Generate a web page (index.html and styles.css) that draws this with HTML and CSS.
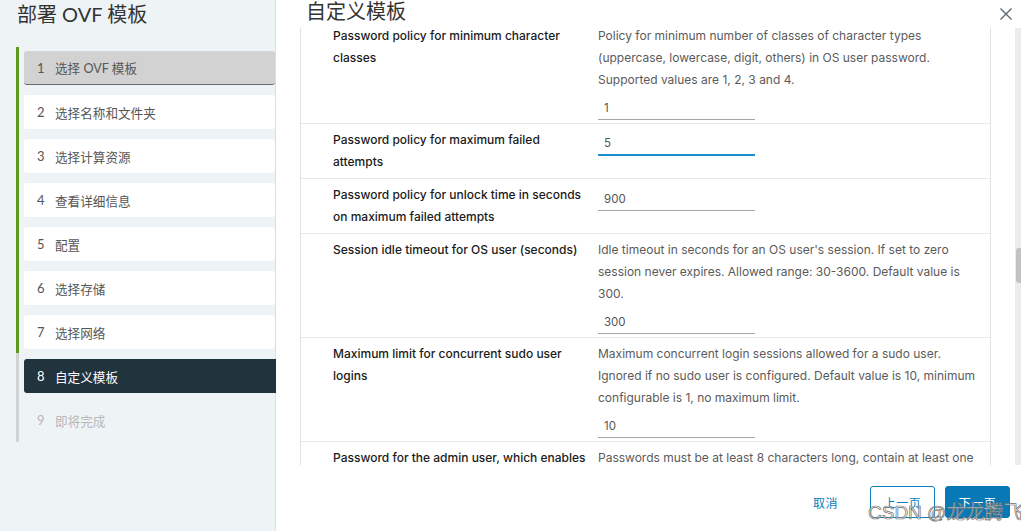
FILE: index.html
```html
<!DOCTYPE html>
<html lang="zh">
<head>
<meta charset="utf-8">
<title>部署 OVF 模板</title>
<link rel="stylesheet" href="styles.css">
</head>
<body>
<div class="app">
  <aside class="sidebar">
    <h1 class="side-title">部署 OVF 模板</h1>
    <div class="steps">
      <div class="progress"><div class="progress-done"></div><div class="progress-todo"></div></div>
      <ol class="step-list">
        <li class="step step-first"><span class="num">1</span>选择 OVF 模板</li>
        <li class="step"><span class="num">2</span>选择名称和文件夹</li>
        <li class="step"><span class="num">3</span>选择计算资源</li>
        <li class="step"><span class="num">4</span>查看详细信息</li>
        <li class="step"><span class="num">5</span>配置</li>
        <li class="step"><span class="num">6</span>选择存储</li>
        <li class="step"><span class="num">7</span>选择网络</li>
        <li class="step step-active"><span class="num">8</span>自定义模板</li>
        <li class="step step-disabled"><span class="num">9</span>即将完成</li>
      </ol>
    </div>
  </aside>
  <main class="main">
    <header class="main-head">
      <h2 class="main-title">自定义模板</h2>
      <svg class="close" width="14" height="14" viewBox="0 0 14 14"><path d="M1.5 1.5 L12.5 12.5 M12.5 1.5 L1.5 12.5" stroke="#5a6770" stroke-width="1.4" fill="none"/></svg>
    </header>
    <div class="scroll-area">
      <div class="viewport">
        <div class="table">
          <div class="row">
            <div class="label">Password policy for minimum character classes</div>
            <div class="field">
              <p class="desc">Policy for minimum number of classes of character types (uppercase, lowercase, digit, others) in OS user password. Supported values are 1, 2, 3 and 4.</p>
              <div class="input">1</div>
            </div>
          </div>
          <div class="row">
            <div class="label">Password policy for maximum failed attempts</div>
            <div class="field">
              <div class="input input-focus">5</div>
            </div>
          </div>
          <div class="row">
            <div class="label">Password policy for unlock time in seconds on maximum failed attempts</div>
            <div class="field">
              <div class="input">900</div>
            </div>
          </div>
          <div class="row">
            <div class="label">Session idle timeout for OS user (seconds)</div>
            <div class="field">
              <p class="desc">Idle timeout in seconds for an OS user's session. If set to zero session never expires. Allowed range: 30-3600. Default value is 300.</p>
              <div class="input">300</div>
            </div>
          </div>
          <div class="row">
            <div class="label">Maximum limit for concurrent sudo user logins</div>
            <div class="field">
              <p class="desc">Maximum concurrent login sessions allowed for a sudo user. Ignored if no sudo user is configured. Default value is 10, minimum configurable is 1, no maximum limit.</p>
              <div class="input">10</div>
            </div>
          </div>
          <div class="row">
            <div class="label">Password for the admin user, which enables SSH access to the appliance</div>
            <div class="field">
              <p class="desc">Passwords must be at least 8 characters long, contain at least one uppercase letter, one lowercase letter, one digit and one special character.</p>
            </div>
          </div>
        </div>
      </div>
      <div class="scrollbar"><div class="thumb"></div></div>
    </div>
    <footer class="footer">
      <button class="btn btn-link">取消</button>
      <button class="btn btn-outline">上一页</button>
      <button class="btn btn-primary">下一页</button>
    </footer>
  </main>
</div>
<div class="watermark">CSDN @龙龙腾飞</div>
</body>
</html>
```
FILE: styles.css
```css
* { box-sizing: border-box; }
html, body { margin: 0; padding: 0; }
body {
  width: 1021px;
  height: 531px;
  overflow: hidden;
  background: #ffffff;
  font-family: "Lato", "Noto Sans CJK SC", sans-serif;
  color: #333;
  position: relative;
}
.app { display: flex; height: 531px; }

/* Sidebar */
.sidebar {
  width: 276px;
  flex: none;
  background: #eef3f6;
  border-right: 1px solid #d9dee1;
  padding: 0 0 0 16px;
}
.side-title {
  margin: 0;
  padding: 0 0 0 1px;
  height: 47px;
  font-family: "Lato", "Noto Sans CJK SC", sans-serif;
  font-weight: 400;
  font-size: 20px;
  line-height: 28px;
  color: #333;
}
.steps { display: flex; }
.progress { width: 3px; display: flex; flex-direction: column; flex: none; }
.progress-done { height: 306px; background: #5c9a1e; }
.progress-todo { height: 89px; background: #cfd3d6; }
.step-list {
  list-style: none;
  margin: 0;
  padding: 4px 0 0 5px;
  display: flex;
  flex-direction: column;
  gap: 10px;
  width: 256px;
}
.step {
  height: 34px;
  display: flex;
  align-items: center;
  padding-left: 13px;
  background: #ffffff;
  border-radius: 3px;
  font-family: "Lato", "Noto Sans CJK SC", sans-serif;
  font-size: 12.6px;
  color: #565656;
}
.step .num { width: 18px; flex: none; font-size: 13px; }
.step-first { background: #d2d2d2; border-bottom: 1px solid #6b6b6b; }
.step-active { background: #21333c; color: #fff; margin-right: -1px; border-radius: 3px 0 0 3px; }
.step-disabled { background: transparent; color: #b8b8b8; }

/* Main */
.main { flex: 1; display: flex; flex-direction: column; min-width: 0; }
.main-head {
  height: 28px;
  display: flex;
  align-items: flex-start;
  justify-content: space-between;
  padding: 0 8px 0 30px;
}
.main-title {
  margin: 0;
  font-weight: 400;
  font-size: 20px;
  line-height: 23px;
  color: #333;
  font-family: "Lato", "Noto Sans CJK SC", sans-serif;
}
.close { margin-top: 7px; }

.scroll-area {
  height: 437px;
  display: flex;
  padding-left: 24px;
}
.viewport {
  width: 715px;
  overflow: hidden;
  position: relative;
}
.table {
  width: 691px;
  margin-top: -8px;
  border-left: 1px solid #dfe3e6;
  border-right: 1px solid #dfe3e6;
}
.row {
  display: flex;
  padding: 5px 0 3px 32px;
  border-bottom: 1px solid #e6eaed;
}
.label {
  width: 265px;
  flex: none;
  padding: 0 8px 2px 0;
  font-family: "Inter", "Noto Sans CJK SC", sans-serif;
  font-size: 12px;
  line-height: 22px;
  color: #1b1b1b;
  font-weight: 500;
}
.field { width: 378px; flex: none; }
.desc {
  margin: 0 0 6px;
  font-family: "Inter", "Noto Sans CJK SC", sans-serif;
  font-size: 12px;
  line-height: 22px;
  color: #5b5b5b;
}
.input {
  margin-top: 4px;
  width: 157px;
  height: 23px;
  padding: 0 6px;
  font-family: "Inter", sans-serif;
  font-size: 11.5px;
  line-height: 22px;
  color: #555;
  border-bottom: 1px solid #a6a6a6;
}
.input-focus { border-bottom: 2px solid #1a8fd0; line-height: 21px; }

.scrollbar {
  width: 6px;
  margin-left: auto;
  background: #ececec;
  position: relative;
}
.thumb {
  position: absolute;
  left: 1px;
  right: 0;
  top: 220px;
  height: 35px;
  background: #c2c2c2;
  border-radius: 3px 0 0 3px;
}

/* Footer */
.footer {
  flex: 1;
  display: flex;
  justify-content: flex-end;
  align-items: flex-start;
  gap: 10px;
  padding: 21px 11px 0 0;
}
.btn {
  width: 65px;
  height: 32px;
  border-radius: 3px;
  font-family: "Lato", "Noto Sans CJK SC", sans-serif;
  font-size: 12px;
  letter-spacing: 0.5px;
  cursor: pointer;
  padding: 0;
}
.btn-link { background: transparent; border: 0; color: #0a7fbb; margin-right: 2px; }
.btn-outline { background: #fff; border: 1px solid #0a7fbb; color: #0a7fbb; }
.btn-primary { background: #0979b6; border: 1px solid #0979b6; color: #fff; }

.watermark {
  position: absolute;
  left: 868px;
  top: 502px;
  font-family: "Liberation Sans", "Noto Sans CJK SC", sans-serif;
  font-size: 19px;
  line-height: 22px;
  color: rgba(255,255,255,0.55);
  -webkit-text-stroke: 0.7px #6f6f6f;
  white-space: nowrap;
  pointer-events: none;
}
```
